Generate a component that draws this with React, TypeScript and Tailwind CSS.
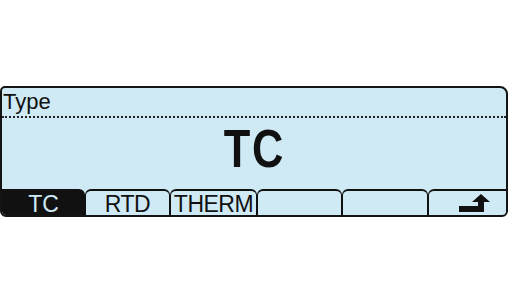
import React from "react";

const keys = [
  { label: "RTD", w: "w-[85px]" },
  { label: "THERM", w: "w-[87px]" },
  { label: "", w: "w-[85px]" },
  { label: "", w: "w-[86px]" },
];

const ReturnArrow = () => (
  <svg width="32" height="19" viewBox="0 0 32 19" className="block">
    <path d="M0 12H19V8H13L22 0L31 8H25V18H0Z" fill="#111" />
  </svg>
);

export default function App() {
  return (
    <div
      className="w-full h-screen bg-white pt-[86px]"
      style={{ fontFamily: '"Liberation Sans", Arial, sans-serif' }}
    >
      <div className="w-[508px] h-[131px] flex flex-col border-2 border-[#141414] rounded-tl-[5px] rounded-tr-[8px] rounded-b-[6px] overflow-hidden bg-[#cfe9f5] text-[#111]">
        {/* header */}
        <div className="h-[30px] shrink-0 border-b-2 border-dotted border-[#222] pt-[3px] pl-[1px] text-[22px] leading-[22px]">
          Type
        </div>

        {/* value */}
        <div className="flex-1 flex justify-center pt-[4px]">
          <span className="inline-block scale-x-[0.82] font-bold text-[53px] leading-none tracking-[2px]">
            TC
          </span>
        </div>

        {/* softkeys */}
        <div className="h-[26px] shrink-0 flex text-[23px] leading-none">
          <div className="w-[83px] bg-[#111] text-[#cfe9f5] rounded-tr-[6px] flex justify-center pt-[4px]">
            TC
          </div>
          {keys.map((k, i) => (
            <div
              key={i}
              className={`${k.w} border-t-2 border-x border-[#111] rounded-t-[6px] flex justify-center pt-[2px] tracking-[-0.5px]`}
            >
              {k.label}
            </div>
          ))}
          <div className="flex-1 border-t-2 border-l border-[#111] rounded-tl-[6px] flex justify-end items-start pt-[3px] pr-[15px]">
            <ReturnArrow />
          </div>
        </div>
      </div>
    </div>
  );
}
